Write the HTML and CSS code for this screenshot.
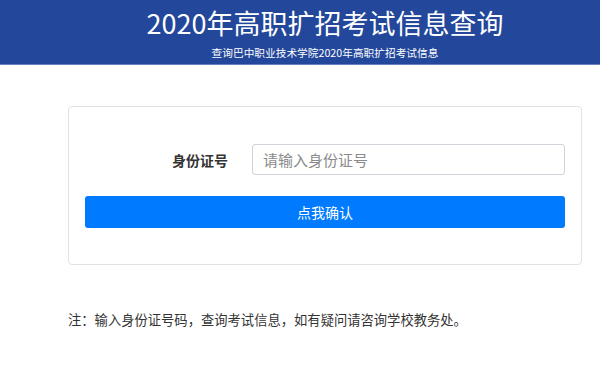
FILE: index.html
```html
<!DOCTYPE html>
<html lang="zh-CN">
<head>
    <meta charset="UTF-8">
    <meta name="viewport" content="width=device-width, initial-scale=1.0">
    <title>2020年高职扩招考试信息查询</title>
    <link rel="stylesheet" href="styles.css">
</head>
<body>
    <div class="header">
        <h1>2020年高职扩招考试信息查询</h1>
        <p class="subtitle">查询巴中职业技术学院2020年高职扩招考试信息</p>
    </div>

    <div class="main">
        <div class="card">
            <div class="form-row">
                <label for="id-input">身份证号</label>
                <input type="text" id="id-input" placeholder="请输入身份证号">
            </div>
            <button class="submit-btn">点我确认</button>
        </div>

        <p class="note">注：输入身份证号码，查询考试信息，如有疑问请咨询学校教务处。</p>
    </div>
</body>
</html>
```

FILE: styles.css
```css
body {
    font-family: "Noto Sans CJK SC", "Noto Sans", sans-serif;
    background: #fff;
    color: #333;
    margin: 0;
    padding: 0;
}

/* Header */
.header {
    background: #23479a;
    border-bottom: 1px solid #6a82c0;
    height: 64px;
    padding-left: 50px;
    text-align: center;
    color: #fff;
}

.header h1 {
    margin: 0;
    padding-top: 5px;
    font-size: 27px;
    font-weight: normal;
    line-height: 36px;
}

.subtitle {
    margin: 4px 0 0;
    font-size: 10.7px;
    line-height: 16px;
}

/* Main */
.main {
    padding: 41px 18px 0 68px;
}

.card {
    border: 1px solid #e2e2e2;
    border-radius: 4px;
    padding: 37px 16px 36px;
}

.form-row {
    display: flex;
    align-items: center;
    gap: 24px;
}

.form-row label {
    width: 143px;
    text-align: right;
    font-size: 14px;
    font-weight: bold;
    color: #333;
}

.form-row input {
    flex: 1;
    height: 31px;
    box-sizing: border-box;
    border: 1px solid #ced4da;
    border-radius: 3px;
    padding: 0 10px;
    font-family: inherit;
    font-size: 15px;
    color: #333;
}

.form-row input::placeholder {
    color: #8a8a8a;
}

.submit-btn {
    display: block;
    width: 100%;
    height: 32px;
    margin-top: 21px;
    background: #007bff;
    color: #fff;
    border: none;
    border-radius: 3px;
    font-family: inherit;
    font-size: 14px;
    cursor: pointer;
}

.note {
    margin: 45px 0 0;
    font-size: 13.3px;
    color: #333;
}
```
